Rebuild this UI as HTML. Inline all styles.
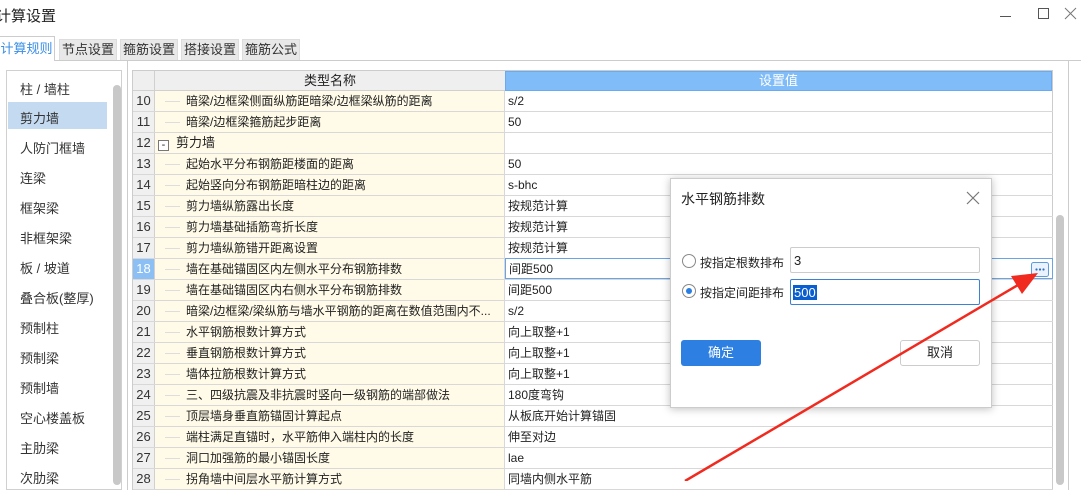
<!DOCTYPE html>
<html><head><meta charset="utf-8"><style>
*{box-sizing:border-box;margin:0;padding:0}
body{width:1081px;height:481px;overflow:hidden;background:#fff;font-family:"Liberation Sans","Noto Sans CJK SC",sans-serif;font-size:12px;color:#222;position:relative}
.abs{position:absolute}
.tab{position:absolute;top:39px;height:21px;background:#e8e8e8;border:1px solid #ddd;border-bottom:none;font-size:13px;line-height:20px;text-align:center;color:#333}
.li{position:absolute;left:20px;font-size:13px;color:#333}
.row{position:absolute;left:133px;width:920px;height:21px;border-bottom:1px solid #d8d8d8}
.row .n{position:absolute;left:0;width:22px;height:20px;background:#f0f0f0;border-right:1px solid #d0d0d0;text-align:center;line-height:20px;font-size:13px;color:#333}
.row .t{position:absolute;left:22px;width:350px;height:20px;background:#fffbe8;border-right:1px solid #d8d8d8;line-height:20px;padding-left:31px;white-space:nowrap;overflow:hidden}
.row .t:before{content:"";position:absolute;left:10px;top:10px;width:15px;border-top:1px solid #ddd}
.row .t.nl:before{display:none}
.row .v{position:absolute;left:372px;width:548px;height:20px;line-height:20px;padding-left:3px}
</style></head><body>
<div class="abs" style="left:-4px;top:5px;font-size:15px;color:#222">计算设置</div>
<svg class="abs" style="left:0;top:0" width="1081" height="30"><line x1="1000" y1="16.5" x2="1011" y2="16.5" stroke="#555"/><rect x="1038.5" y="8.5" width="10" height="10" fill="none" stroke="#555"/><path d="M1065 8 L1076 19 M1076 8 L1065 19" stroke="#777" stroke-width="1"/></svg>

<div class="abs" style="left:0;top:60px;width:1081px;border-top:1px solid #ccc"></div>
<div class="tab" style="left:-2px;top:36px;width:57px;height:25px;background:#fff;border-color:#ccc;color:#3a8ee6;line-height:24px">计算规则</div>
<div class="tab" style="left:59px;width:58px">节点设置</div>
<div class="tab" style="left:120px;width:58px">箍筋设置</div>
<div class="tab" style="left:181px;width:58px">搭接设置</div>
<div class="tab" style="left:242px;width:58px">箍筋公式</div>

<div class="abs" style="left:6px;top:70px;width:116px;height:420px;border:1px solid #d0d0d0"></div>
<div class="abs" style="left:8px;top:102px;width:99px;height:27px;background:#c3daf1"></div>
<div class="abs" style="left:113px;top:85px;width:8px;height:400px;background:#c8c8c8;border-radius:4px"></div>
<div class="li" style="top:79px">柱 / 墙柱</div>
<div class="li" style="top:108px">剪力墙</div>
<div class="li" style="top:138px">人防门框墙</div>
<div class="li" style="top:168px">连梁</div>
<div class="li" style="top:198px">框架梁</div>
<div class="li" style="top:228px">非框架梁</div>
<div class="li" style="top:258px">板 / 坡道</div>
<div class="li" style="top:288px">叠合板(整厚)</div>
<div class="li" style="top:318px">预制柱</div>
<div class="li" style="top:348px">预制梁</div>
<div class="li" style="top:378px">预制墙</div>
<div class="li" style="top:408px">空心楼盖板</div>
<div class="li" style="top:438px">主肋梁</div>
<div class="li" style="top:468px">次肋梁</div>

<div class="abs" style="left:127px;top:60px;width:942px;height:430px;border-left:1px solid #ccc;border-right:1px solid #ccc"></div>
<div class="abs" style="left:132px;top:70px;width:921px;height:420px;border:1px solid #ccc"></div>
<div class="abs" style="left:133px;top:71px;width:22px;height:20px;background:#efefef;border-right:1px solid #d0d0d0;border-bottom:1px solid #d0d0d0"></div>
<div class="abs" style="left:155px;top:71px;width:350px;height:20px;background:#efefef;border-bottom:1px solid #d0d0d0;text-align:center;line-height:20px;font-size:13px">类型名称</div>
<div class="abs" style="left:505px;top:71px;width:547px;height:20px;background:#80bcf8;border:1px solid #6aaaf0;text-align:center;line-height:18px;font-size:13px;color:#fff">设置值</div>
<div class="abs" style="left:1056px;top:215px;width:8px;height:270px;background:#c8c8c8;border-radius:4px"></div>

<div class="row" style="top:91px"><div class="n">10</div><div class="t">暗梁/边框梁侧面纵筋距暗梁/边框梁纵筋的距离</div><div class="v">s/2</div></div>
<div class="row" style="top:112px"><div class="n">11</div><div class="t">暗梁/边框梁箍筋起步距离</div><div class="v">50</div></div>
<div class="row" style="top:133px"><div class="n">12</div><div class="t nl" style="padding-left:3px"><span style="display:inline-block;width:11px;height:11px;border:1px solid #777;line-height:8px;text-align:center;font-size:11px;margin-right:7px;vertical-align:-1px;background:#fff">-</span><span style="font-size:13px">剪力墙</span></div><div class="v"></div></div>
<div class="row" style="top:154px"><div class="n">13</div><div class="t">起始水平分布钢筋距楼面的距离</div><div class="v">50</div></div>
<div class="row" style="top:175px"><div class="n">14</div><div class="t">起始竖向分布钢筋距暗柱边的距离</div><div class="v">s-bhc</div></div>
<div class="row" style="top:196px"><div class="n">15</div><div class="t">剪力墙纵筋露出长度</div><div class="v">按规范计算</div></div>
<div class="row" style="top:217px"><div class="n">16</div><div class="t">剪力墙基础插筋弯折长度</div><div class="v">按规范计算</div></div>
<div class="row" style="top:238px"><div class="n">17</div><div class="t">剪力墙纵筋错开距离设置</div><div class="v">按规范计算</div></div>
<div class="row" style="top:259px"><div class="n" style="background:#8cc0f5;color:#fff">18</div><div class="t">墙在基础锚固区内左侧水平分布钢筋排数</div><div class="v" style="border:1px solid #6aa4e6;height:21px;top:-1px;line-height:20px">间距500</div></div>
<div class="row" style="top:280px"><div class="n">19</div><div class="t">墙在基础锚固区内右侧水平分布钢筋排数</div><div class="v">间距500</div></div>
<div class="row" style="top:301px"><div class="n">20</div><div class="t">暗梁/边框梁/梁纵筋与墙水平钢筋的距离在数值范围内不...</div><div class="v">s/2</div></div>
<div class="row" style="top:322px"><div class="n">21</div><div class="t">水平钢筋根数计算方式</div><div class="v">向上取整+1</div></div>
<div class="row" style="top:343px"><div class="n">22</div><div class="t">垂直钢筋根数计算方式</div><div class="v">向上取整+1</div></div>
<div class="row" style="top:364px"><div class="n">23</div><div class="t">墙体拉筋根数计算方式</div><div class="v">向上取整+1</div></div>
<div class="row" style="top:385px"><div class="n">24</div><div class="t">三、四级抗震及非抗震时竖向一级钢筋的端部做法</div><div class="v">180度弯钩</div></div>
<div class="row" style="top:406px"><div class="n">25</div><div class="t">顶层墙身垂直筋锚固计算起点</div><div class="v">从板底开始计算锚固</div></div>
<div class="row" style="top:427px"><div class="n">26</div><div class="t">端柱满足直锚时，水平筋伸入端柱内的长度</div><div class="v">伸至对边</div></div>
<div class="row" style="top:448px"><div class="n">27</div><div class="t">洞口加强筋的最小锚固长度</div><div class="v">lae</div></div>
<div class="row" style="top:469px"><div class="n">28</div><div class="t">拐角墙中间层水平筋计算方式</div><div class="v">同墙内侧水平筋</div></div>

<svg class="abs" style="left:1031px;top:262px" width="18" height="15"><rect x="0.5" y="0.5" width="17" height="14" rx="2" fill="#eaf3fd" stroke="#5b9be0"/><circle cx="5.5" cy="7.5" r="1.1" fill="#2f6fc0"/><circle cx="9" cy="7.5" r="1.1" fill="#2f6fc0"/><circle cx="12.5" cy="7.5" r="1.1" fill="#2f6fc0"/></svg>

<div class="abs" style="left:670px;top:178px;width:322px;height:230px;background:#fff;border:1px solid #ccc;box-shadow:0 1px 8px rgba(0,0,0,.25)"></div>
<div class="abs" style="left:681px;top:189px;font-size:14px;color:#222">水平钢筋排数</div>
<svg class="abs" style="left:966px;top:191px" width="14" height="14"><path d="M1 1 L13 13 M13 1 L1 13" stroke="#777" stroke-width="1.2"/></svg>
<div class="abs" style="left:682px;top:254px;width:14px;height:14px;border:1px solid #888;border-radius:50%"></div>
<div class="abs" style="left:700px;top:254px;font-size:12px">按指定根数排布</div>
<div class="abs" style="left:790px;top:247px;width:190px;height:26px;border:1px solid #ccc;border-radius:2px;padding:6px 3px;font-size:13px;line-height:13px">3</div>
<div class="abs" style="left:682px;top:284px;width:14px;height:14px;border:1px solid #888;border-radius:50%"><div style="position:absolute;left:3px;top:3px;width:6px;height:6px;border-radius:50%;background:#2a7de1"></div></div>
<div class="abs" style="left:700px;top:284px;font-size:12px">按指定间距排布</div>
<div class="abs" style="left:790px;top:279px;width:190px;height:26px;border:1px solid #3b82d6;border-radius:2px"><span style="position:absolute;left:2px;top:5px;background:#0a5fd0;color:#fff;font-size:13px;line-height:15px;padding:0 1px">500</span></div>
<div class="abs" style="left:681px;top:340px;width:80px;height:26px;background:#2d80e2;border-radius:3px;color:#fff;text-align:center;line-height:26px;font-size:13px">确定</div>
<div class="abs" style="left:900px;top:340px;width:80px;height:26px;border:1px solid #ccc;border-radius:3px;text-align:center;line-height:24px;font-size:13px">取消</div>

<svg class="abs" style="left:0;top:0" width="1081" height="481"><line x1="685" y1="481" x2="1018" y2="285" stroke="#f02a1e" stroke-width="2.5"/><polygon points="1038,273 1011,276 1022,294" fill="#f02a1e"/></svg>
</body></html>
